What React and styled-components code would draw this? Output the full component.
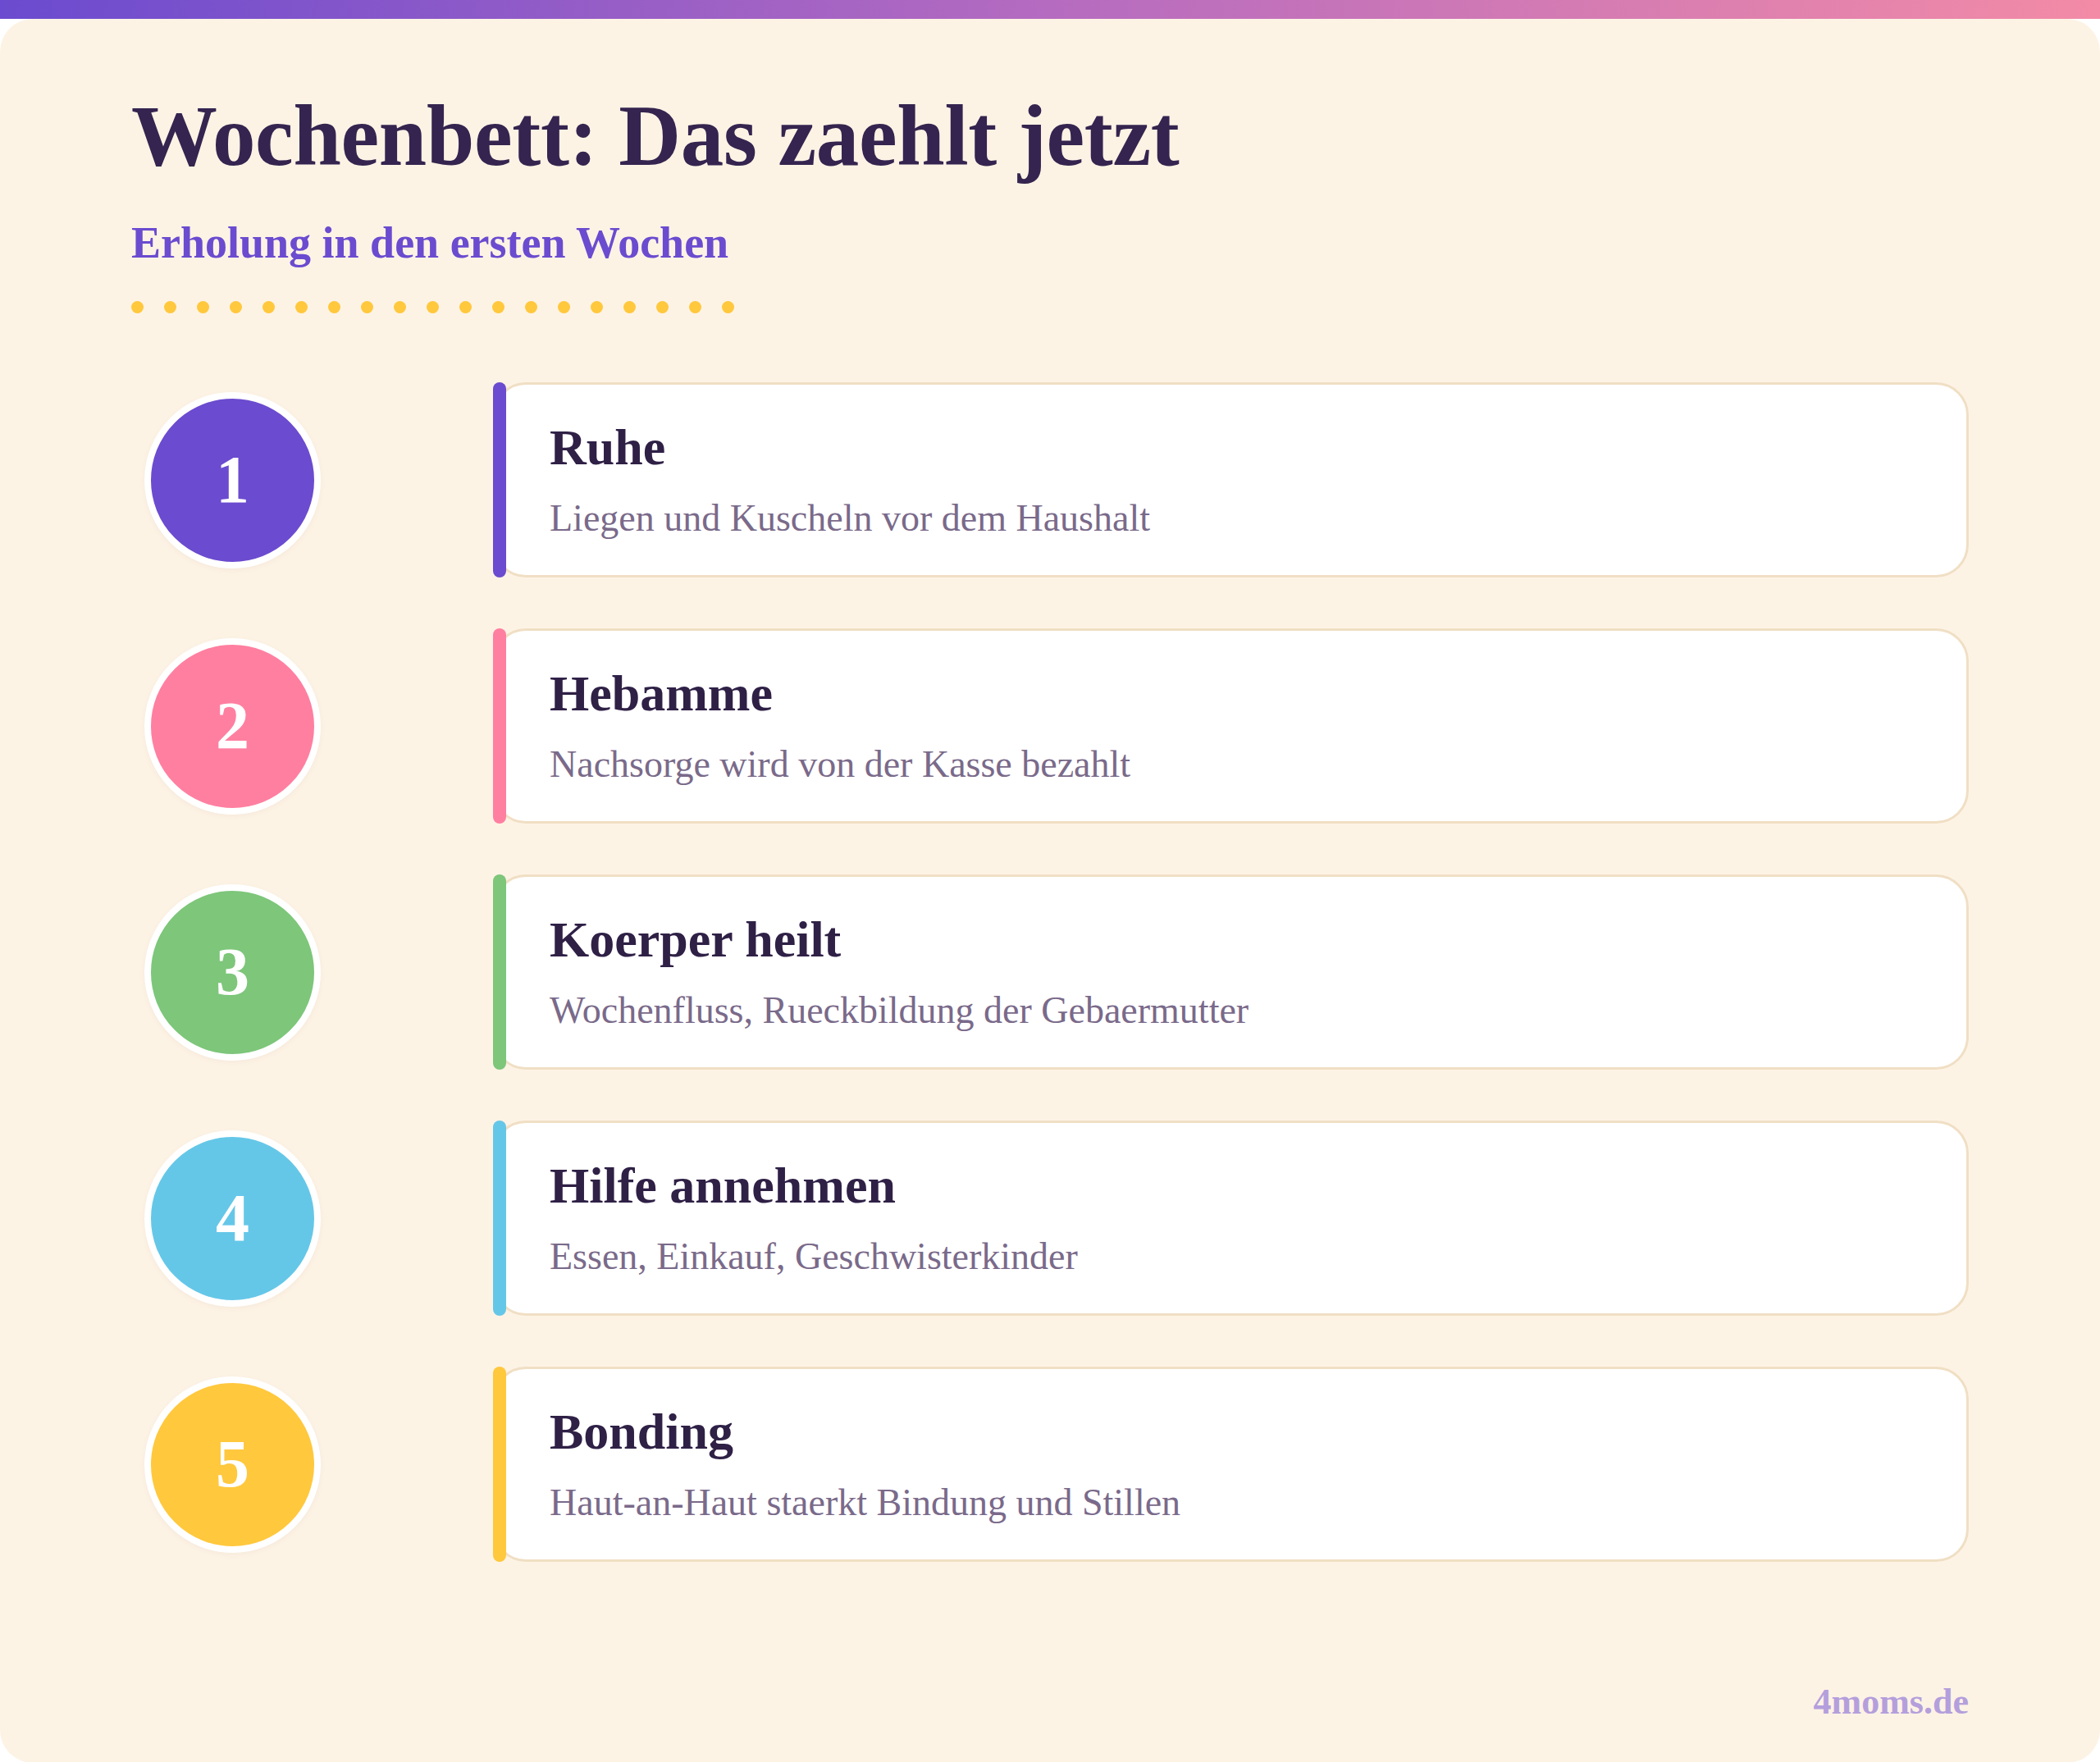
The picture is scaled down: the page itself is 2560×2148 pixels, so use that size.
import React from "react";
import styled, { createGlobalStyle } from "styled-components";

const Global = createGlobalStyle`
  html, body { margin: 0; padding: 0; background: #ffffff; }
  body { font-family: "Liberation Serif", "Times New Roman", serif; }
`;

const Page = styled.div`
  width: 2560px;
  min-height: 2148px;
  display: flex;
  flex-direction: column;
  background: #ffffff;
`;

const TopBar = styled.div`
  height: 23px;
  background: linear-gradient(90deg, #6b4bcf 0%, #b56bc0 50%, #f38ba6 100%);
`;

const Sheet = styled.main`
  flex: 1;
  background: #fdf3e5;
  border-radius: 40px;
  padding: 83px 160px 48px 160px;
  display: flex;
  flex-direction: column;
`;

const Title = styled.h1`
  margin: 0;
  font-size: 105px;
  line-height: 120px;
  font-weight: 700;
  color: #35244f;
  letter-spacing: -0.3px;
`;

const Subtitle = styled.h2`
  margin: 38px 0 0;
  font-size: 54px;
  line-height: 65px;
  font-weight: 700;
  color: #6b4bcf;
`;

const Dots = styled.div`
  display: flex;
  gap: 25px;
  margin-top: 38px;
  padding-left: 0;
`;

const Dot = styled.span`
  width: 15px;
  height: 15px;
  border-radius: 50%;
  background: #ffc83d;
`;

const List = styled.div`
  display: flex;
  flex-direction: column;
  gap: 62px;
  margin-top: 84px;
`;

const Row = styled.div`
  display: grid;
  grid-template-columns: 441px 1fr;
  align-items: center;
`;

const Circle = styled.div`
  margin-left: 16px;
  width: 199px;
  height: 199px;
  border-radius: 50%;
  border: 8px solid #ffffff;
  background: ${(p) => p.$color};
  color: #ffffff;
  display: flex;
  align-items: center;
  justify-content: center;
  font-size: 82px;
  font-weight: 700;
  box-shadow: 0 2px 6px rgba(120, 90, 60, 0.06);
`;

const Card = styled.div`
  position: relative;
  height: 238px;
  box-sizing: border-box;
  background: #ffffff;
  border: 3px solid #f0dfc4;
  border-radius: 40px;
  padding: 40px 0 0 66px;

  &::before {
    content: "";
    position: absolute;
    left: -3px;
    top: -3px;
    bottom: -3px;
    width: 16px;
    border-radius: 8px;
    background: ${(p) => p.$color};
  }
`;

const CardTitle = styled.div`
  font-size: 62px;
  line-height: 72px;
  font-weight: 700;
  color: #2f2046;
`;

const CardText = styled.div`
  margin-top: 22px;
  font-size: 46px;
  line-height: 57px;
  color: #7a6a8a;
`;

const Footer = styled.div`
  margin-top: 144px;
  text-align: right;
  font-size: 44px;
  line-height: 53px;
  font-weight: 700;
  color: #b49fdc;
`;

const items = [
  { n: 1, color: "#6b4bcf", title: "Ruhe", text: "Liegen und Kuscheln vor dem Haushalt" },
  { n: 2, color: "#ff7fa0", title: "Hebamme", text: "Nachsorge wird von der Kasse bezahlt" },
  { n: 3, color: "#7dc67a", title: "Koerper heilt", text: "Wochenfluss, Rueckbildung der Gebaermutter" },
  { n: 4, color: "#65c7e8", title: "Hilfe annehmen", text: "Essen, Einkauf, Geschwisterkinder" },
  { n: 5, color: "#ffc83d", title: "Bonding", text: "Haut-an-Haut staerkt Bindung und Stillen" },
];

export default function App() {
  return (
    <Page>
      <Global />
      <TopBar />
      <Sheet>
        <Title>Wochenbett: Das zaehlt jetzt</Title>
        <Subtitle>Erholung in den ersten Wochen</Subtitle>
        <Dots>
          {Array.from({ length: 19 }).map((_, i) => (
            <Dot key={i} />
          ))}
        </Dots>
        <List>
          {items.map((it) => (
            <Row key={it.n}>
              <Circle $color={it.color}>{it.n}</Circle>
              <Card $color={it.color}>
                <CardTitle>{it.title}</CardTitle>
                <CardText>{it.text}</CardText>
              </Card>
            </Row>
          ))}
        </List>
        <Footer>4moms.de</Footer>
      </Sheet>
    </Page>
  );
}
